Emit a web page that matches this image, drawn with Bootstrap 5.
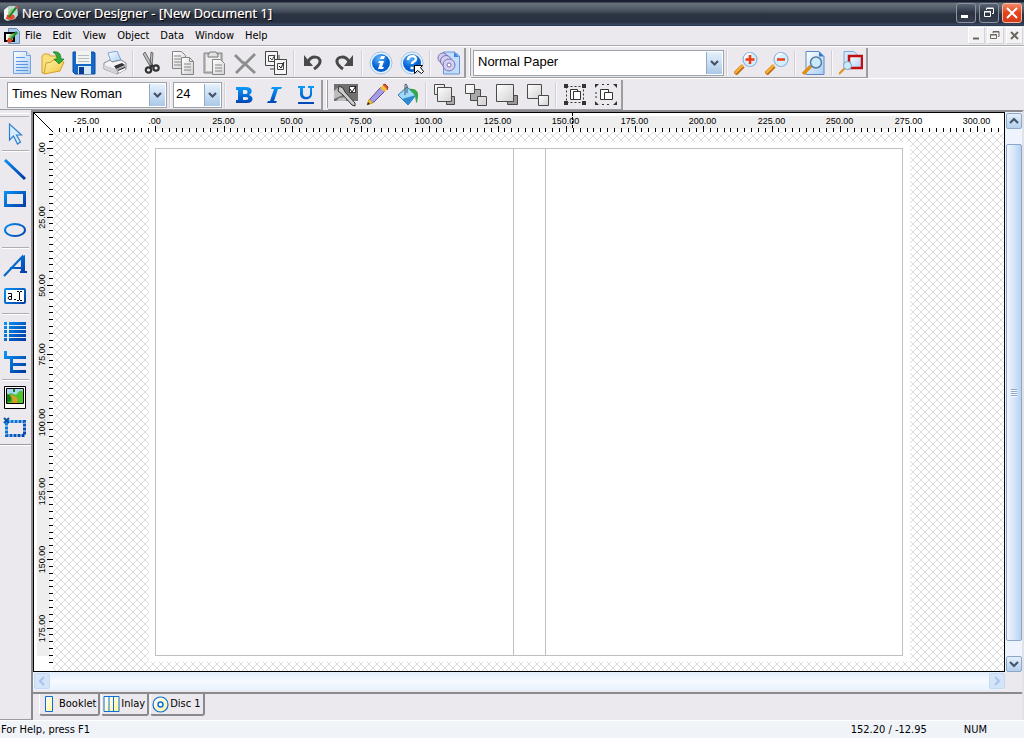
<!DOCTYPE html>
<html lang="en">
<head>
<meta charset="utf-8">
<meta name="viewport" content="width=device-width, initial-scale=1">
<title>Nero Cover Designer - [New Document 1]</title>
<link href="https://cdn.jsdelivr.net/npm/bootstrap@5.3.0/dist/css/bootstrap.min.css" rel="stylesheet">
<style>
:root{--face:#ebe9ed;--edge:#9d9da1}
body{font-family:"DejaVu Sans Condensed","Noto Sans",sans-serif;font-size:11px;line-height:14px;color:#000;background:var(--face)}
button{font:inherit}
.app-title{height:26px;padding:0 2px 0 3px;background:linear-gradient(#1a2032 0,#1a2032 2px,#69737d 3px,#56606c 8px,#39424f 13px,#2c3342 14px,#29303f 22px,#3b4a66 25px,#202a40 26px);color:#fff}
.app-title h1{font:500 13px/20px "Open Sans","Noto Sans",sans-serif;text-shadow:1px 1px 0 #000,0 0 1px #fff;margin:0 0 0 3px}
.title-buttons{gap:3px}
.win-btn{width:20px;height:20px;border:1px solid #8b94a2;border-radius:3px;background:linear-gradient(#5a6472,#2b3343 50%,#38404f);padding:0}
.win-close{background:linear-gradient(#f08a68,#e2431f 50%,#d93a17);border-color:#f3b9a6}
.menu-row{height:20px;border-bottom:1px solid #a9a8ad}
.menu-row a{color:#000;text-decoration:none;padding:2px 6px 2px 5px}
.doc-buttons{gap:2px;padding-right:1px}
.mdi-btn{width:17px;height:17px;border:1px solid;border-color:#fff #d5d3d8 #d5d3d8 #fff;background:#f3f2f5;padding:0}
.tool-row{height:32px;border-top:1px solid #fff;padding-top:1px}
.band{height:30px;border-right:2px solid var(--edge);border-bottom:1px solid var(--edge)}
.grip{width:2px;height:28px;background:#fff;border-right:1px solid var(--edge);margin-left:3px}
.tool{width:31px;height:30px;padding:0;border:0;border-radius:0;display:flex;align-items:center;justify-content:center;flex:none}
.tool svg{width:24px;height:24px;display:block}
.vsep{width:6px;height:26px;flex:none;background:linear-gradient(#d2d0d6,#d2d0d6) 2px 0/1px 100% no-repeat,linear-gradient(#f8f8fa,#f8f8fa) 3px 0/1px 100% no-repeat}
.combo{height:26px;border:1px solid #9ba4ab;box-shadow:inset 0 0 0 1px #fff;border-radius:0;appearance:none;padding:0 18px 2px 4px;font:13px/20px "Liberation Sans",Arial,sans-serif;color:#000;
background:#fff url("data:image/svg+xml,%3Csvg xmlns='http://www.w3.org/2000/svg' width='17' height='24'%3E%3Cdefs%3E%3ClinearGradient id='a' x2='0' y2='1'%3E%3Cstop stop-color='%23e6f1fb'/%3E%3Cstop offset='.5' stop-color='%23c9def4'/%3E%3Cstop offset='1' stop-color='%23a9c7e6'/%3E%3C/linearGradient%3E%3C/defs%3E%3Crect x='.5' y='.5' width='16' height='23' fill='url(%23a)' stroke='%238fabc8'/%3E%3Cpath d='M5 10l3.500 3.500l3.500-3.500' fill='none' stroke='%23455268' stroke-width='2.200'/%3E%3C/svg%3E") right 0 top 0 no-repeat}
.paper-combo{width:251px}
.font-combo{width:160px}
.size-combo{width:49px;padding-left:2px}
.dock{width:31px;padding-top:2px;border-bottom:1px solid var(--edge)}
.dock .tool{height:31px;width:30px}
.dock-grip{height:4px;margin:1px 2px 1px 0;border-top:1px solid #fff;border-bottom:1px solid #b5b4b9}
.hsep{height:4px;margin:0 2px;background:linear-gradient(#aeadb2,#aeadb2) 0 1px/100% 1px no-repeat,linear-gradient(#fff,#fff) 0 2px/100% 1px no-repeat}
.dock-end{height:2px;border-top:1px solid var(--edge);background:#fff}
.doc-frame{border-style:solid;border-width:2px 2px 0 2px;border-color:#8a898e #dfe3e8 #8a898e #8a898e;min-width:0}
.work{display:grid;grid-template-columns:19px minmax(0,1fr);grid-template-rows:19px minmax(0,1fr);border:1px solid #000;background:#fff;min-width:0}
.work>svg{display:block;width:100%;height:100%;overflow:hidden}
.work text{font:9px "Liberation Sans",Arial,sans-serif;text-anchor:middle}
.desk{padding:10px 0 9px 96px;overflow:hidden;background:#fff url("data:image/svg+xml,%3Csvg xmlns='http://www.w3.org/2000/svg' width='8' height='8' shape-rendering='crispEdges'%3E%3Cpath d='M0 0h1v1H0zM1 1h1v1H1zM2 2h1v1H2zM3 3h1v1H3zM4 4h1v1H4zM5 5h1v1H5zM6 6h1v1H6zM7 7h1v1H7zM7 0h1v1H7zM6 1h1v1H6zM5 2h1v1H5zM4 3h1v1H4zM3 4h1v1H3zM2 5h1v1H2zM1 6h1v1H1zM0 7h1v1H0z' fill='%23dcdcdc'/%3E%3C/svg%3E")}
.paper-area{width:761px;height:520px;padding:6px 7px 6px 6px;background:#fff}
.sheet{height:100%;border:1px solid #c0c0c0}
.back-panel{flex:358 1 0}.spine{flex:31 1 0;border-left:1px solid #c0c0c0;border-right:1px solid #c0c0c0}.front-panel{flex:357 1 0}
.vbar{width:17px;padding:1px 0 0 1px;background:#edf4fe}
.sbtn{width:16px;height:16px;flex:none;padding:0;border:1px solid #8ca7c8;border-radius:2px;background:linear-gradient(#e4effb,#b4d0ec);display:flex;align-items:center;justify-content:center}
.sbtn svg{width:12px;height:12px}
.sbtn:disabled{border-color:#c5d9f2;background:#d4e5fa}
.thumb{width:16px;border:1px solid #8ca7c8;border-radius:2px;background:linear-gradient(90deg,#f0f7ff,#dbe9fc 40%,#b9d1f2);margin:15px 0}
.thumb i{display:block;width:6px;height:8px;background:repeating-linear-gradient(#8fa9c6 0 1px,#f3f8ff 1px 2px)}
.hbar{height:18px;padding:1px 0 1px 1px;background:linear-gradient(#e2eefc,#f6faff 50%,#e8f2fe)}
.corner{width:17px}
.sheet-tabs{height:28px;border-top:2px solid #8a898e;margin-top:2px;padding-left:6px}
.sheet-tab{height:22px;padding:0 2px 0 1px;border:0;border-right:2px solid #8a898e;border-bottom:2px solid #8a898e;border-left:1px solid #fff;border-radius:0 0 3px 3px;background:var(--face);display:flex;align-items:center;gap:1px;margin-right:1px}
.sheet-tab svg{width:17px;height:17px}
.status{height:18px;background:#f0f3f8;border-top:1px solid #fff;padding:0 37px 0 1px}
.coords{margin-right:37px}
</style>
</head>
<body class="min-vh-100 d-flex flex-column">
<svg width="0" height="0" class="position-absolute" aria-hidden="true"><defs>
<linearGradient id="gBlue" x2="0" y2="1"><stop stop-color="#0a9bff"/><stop offset="1" stop-color="#0046b4"/></linearGradient>
<linearGradient id="gBlueV" gradientUnits="userSpaceOnUse" x1="0" y1="0" x2="24" y2="24"><stop stop-color="#0a9bff"/><stop offset="1" stop-color="#002f96"/></linearGradient>
<linearGradient id="gDoc" x2="1" y2="1"><stop stop-color="#fff"/><stop offset="1" stop-color="#a9cdf5"/></linearGradient>
<linearGradient id="gGrey" x2="1" y2="1"><stop stop-color="#fff"/><stop offset="1" stop-color="#d2d2d2"/></linearGradient>
<linearGradient id="gFold" x2="1" y2="1"><stop stop-color="#fff3a8"/><stop offset="1" stop-color="#f2c43d"/></linearGradient>
<radialGradient id="gBall" cx=".4" cy=".25"><stop stop-color="#5db4ff"/><stop offset="1" stop-color="#0560cf"/></radialGradient>
<linearGradient id="gYel" x2="1" y2="1"><stop stop-color="#fff"/><stop offset="1" stop-color="#fff799"/></linearGradient>
<g id="lens"><path d="M1 23l8-8" stroke="#b86a12" stroke-width="4.500"/><path d="M1 22l8-8" stroke="#f8ab36" stroke-width="2.500"/><circle cx="16" cy="8.500" r="7" fill="#d3efff" stroke="#8fb5dc" stroke-width="1.200"/><path d="M11 8a5 5 0 0 1 6-5" stroke="#fff" stroke-width="2" fill="none"/></g>
<g id="logo"><path d="M1 5l5-4h8l1 9-3 4-8 2-3-2z" fill="#b9d9cf"/><path d="M1 5l4-3v9l-4 3z" fill="#f4f6f5"/><path d="M3 14l1-4 3-1 4 1 1 3-4 2z" fill="#e8492b"/><path d="M5 8l3-4 4-1-3 5-3 3z" fill="#8ccb6a"/><path d="M5 12L13 1l2 1-8 10z" fill="#178032"/><path d="M12 2l2-1 1 2-1 1z" fill="#e8492b"/></g>
</defs></svg>

<header>
 <div class="app-title d-flex align-items-center">
  <svg width="16" height="16" viewBox="0 0 16 16" aria-hidden="true"><use href="#logo"/></svg>
  <h1 class="flex-grow-1 text-nowrap">Nero Cover Designer - [New Document 1]</h1>
  <div class="title-buttons d-flex">
   <button class="win-btn" aria-label="Minimize"><svg class="d-block" width="18" height="18"><path d="M4 12.500h7" stroke="#fff" stroke-width="3"/></svg></button>
   <button class="win-btn" aria-label="Restore"><svg class="d-block" width="18" height="18" fill="none" stroke="#fff"><path d="M6.500 6V4.500h7v5H12M6.500 4h7"/><path d="M4.500 7.500h6v5h-6zM4 8h7"/></svg></button>
   <button class="win-btn win-close" aria-label="Close"><svg class="d-block" width="18" height="18"><path d="M4 4l10 10M14 4L4 14" stroke="#fff" stroke-width="2"/></svg></button>
  </div>
 </div>
 <nav class="menu-row d-flex align-items-center" aria-label="Menu">
  <svg class="ms-1" width="16" height="16" viewBox="0 0 16 16" aria-hidden="true"><path d="M4.500.500h8l3 3v12h-11z" fill="#a9c7ea" stroke="#6c8db8"/><path d="M1 5h9v8H1z" fill="#fff" stroke="#000" stroke-width="2"/><path d="M3 14l1-4 4-1 1 3-3 3z" fill="#e8492b"/><path d="M4 9l3-3 4-1-3 5z" fill="#8ccb6a"/><path d="M6 11l6-8 2 2-7 7z" fill="#23933a"/></svg>
  <div class="d-flex flex-grow-1 text-nowrap">
   <a href="#">File</a><a href="#">Edit</a><a href="#">View</a><a href="#">Object</a><a href="#">Data</a><a href="#">Window</a><a href="#">Help</a>
  </div>
  <div class="doc-buttons d-flex">
   <button class="mdi-btn" aria-label="Minimize document"><svg class="d-block" width="15" height="15"><path d="M4 10.500h6" stroke="#6b695f" stroke-width="2"/></svg></button>
   <button class="mdi-btn" aria-label="Restore document"><svg class="d-block" width="15" height="15" fill="none" stroke="#6b695f"><path d="M5 5V3.500h6v5h-1M5 4h6"/><path d="M2.500 6.500h6v4h-6zM2 7h7"/></svg></button>
   <button class="mdi-btn" aria-label="Close document"><svg class="d-block" width="15" height="15"><path d="M4 4l7 7M11 4l-7 7" stroke="#6b695f" stroke-width="2"/></svg></button>
  </div>
 </nav>

 <div class="tool-row d-flex" role="toolbar" aria-label="Standard">
  <div class="band d-flex align-items-center" style="padding-left:6px">
   <button class="tool btn" aria-label="New"><svg viewBox="0 0 24 24"><path d="M3.500.500h13l4 4v18h-17z" fill="url(#gDoc)" stroke="#79a5dd"/><path d="M16.500.500v4h4" fill="#d4e7fc" stroke="#79a5dd"/><path d="M6 6.500h9M6 10.500h12M6 13.500h12M6 16.500h12M6 19.500h12" stroke="#5b97de"/></svg></button>
   <button class="tool btn" aria-label="Open"><svg viewBox="0 0 24 24"><path d="M1 5l2-2h5l1 2h9v5L4 22H1z" fill="#f8e07c" stroke="#cfa02c"/><path d="M5 12l5-1 2-2 11 2-4 9-16 3z" fill="url(#gFold)" stroke="#cfa02c"/><path d="M12 1c6-1 8 2 8 7h3l-5 5-5-5h3c0-3-1-5-4-7z" fill="#35a935" stroke="#14762b" stroke-width=".7"/></svg></button>
   <button class="tool btn" aria-label="Save"><svg viewBox="0 0 24 24"><path d="M1 1h21l1 1v21H3l-2-2z" fill="#1668c8" stroke="#0b4ba2"/><path d="M4 0h15v13H4z" fill="#f2f2ee"/><path d="M6 4.500h11M6 7.500h11M6 10.500h11" stroke="#b7bdc2"/><path d="M6 15h13v8H6z" fill="#d7e9f9"/><path d="M7 16h5v7H7z" fill="#0c3c92"/></svg></button>
   <button class="tool btn" aria-label="Print"><svg viewBox="0 0 24 24"><path d="M8 11L5 2l9-2 4 9z" fill="url(#gDoc)" stroke="#7aa6df"/><path d="M1 12l6-3 2 2 9-2 5 3v6l-9 5-13-5z" fill="#f4f3f6" stroke="#8b8b95"/><path d="M1 14l12 4v5L1 18z" fill="#d2d1d8"/><path d="M13 18l10-4v4l-9 5z" fill="#a9a8b2"/><path d="M11 15l8-3 3 2-9 4z" fill="#333"/><path d="M15 19l7-3v3l-6 3z" fill="#222"/><path d="M15 20l7-3v2l-6 3z" fill="#fff"/></svg></button>
   <span class="vsep"></span>
   <button class="tool btn" aria-label="Cut"><svg viewBox="0 0 24 24"><path d="M3 3l2-2 8 14-2 2zM11 1l2 1-1 14-2-2z" fill="#bcbcbc" stroke="#555" stroke-width=".8"/><g fill="none" stroke="#333" stroke-width="2.200"><circle cx="8.500" cy="19" r="2.700"/><circle cx="16" cy="17" r="2.700"/><path d="M10 16l3-2"/></g></svg></button>
   <button class="tool btn" aria-label="Copy"><svg viewBox="0 0 24 24" fill="url(#gGrey)" stroke="#858585"><path d="M1.500.500h9l4 4v13h-13zM3 5h7M3 8h8M3 11h8M3 14h8"/><path d="M10.500 6.500h8l4 4v13h-12zM18.500 6.500v4h4M13 13h7M13 16h7M13 19h7"/></svg></button>
   <button class="tool btn" aria-label="Paste"><svg viewBox="0 0 24 24"><path d="M2 2h18v20H2z" fill="#c3c3c3" stroke="#818181"/><path d="M4 4h14v16H4z" fill="#eee"/><path d="M6 4l2-3h6l2 3v2H6z" fill="#e2e2e2" stroke="#777"/><path d="M10.500 8.500h8l4 4v11h-12zM13 14h7M13 17h7M13 20h7" fill="url(#gGrey)" stroke="#858585"/></svg></button>
   <button class="tool btn" aria-label="Delete"><svg viewBox="0 0 24 24"><path d="M2 4l8 8M22 3L3 22M10 11l12 11" stroke="#8d8d8d" stroke-width="2.800" fill="none"/></svg></button>
   <button class="tool btn" aria-label="Select all"><svg viewBox="0 0 24 24" fill="#f6f6f6" stroke="#444"><path d="M1.500.500h12v14h-12z"/><path d="M4.500 4.500h6v6h-6z"/><path d="M6 7l2 2 3-5M15 4v5M6 18h4" fill="none"/><path d="M10.500 8.500h12v15h-12z"/><path d="M13.500 12.500h6v6h-6z"/><path d="M15 15l2 2 3-6" fill="none" stroke="#111"/></svg></button>
   <span class="vsep"></span>
   <button class="tool btn" aria-label="Undo"><svg viewBox="0 0 24 24"><path d="M7 11c3-7 13-6 12 0-.5 3-3 5-6 7" fill="none" stroke="#494949" stroke-width="3"/><path d="M3 4v11h9z" fill="#494949"/></svg></button>
   <button class="tool btn" aria-label="Redo"><svg viewBox="0 0 24 24"><path d="M17 11C14 4 4 5 5 11c.5 3 3 5 6 7" fill="none" stroke="#494949" stroke-width="3"/><path d="M21 4v11h-9z" fill="#494949"/></svg></button>
   <span class="vsep"></span>
   <button class="tool btn" aria-label="Info"><svg viewBox="0 0 24 24"><circle cx="12" cy="12" r="11" fill="#eaf3fc" stroke="#9fc3ea"/><circle cx="12" cy="12" r="9" fill="url(#gBall)"/><path d="M12 5h4l-1 3h-4zM10 10h5l-2 6h2l-1 2H9l2-6H9z" fill="#fff"/></svg></button>
   <button class="tool btn" aria-label="Help"><svg viewBox="0 0 24 24"><circle cx="12" cy="12" r="11" fill="#eaf3fc" stroke="#9fc3ea"/><circle cx="12" cy="12" r="9" fill="url(#gBall)"/><path d="M8 9c0-5 8-5 8-1 0 3-4 2-4 5M10.500 17h3" fill="none" stroke="#fff" stroke-width="2.500"/><path d="M14.500 14.500h8l-2 2 3 4-2 2-4-3-3 3z" fill="#fff" stroke="#000"/></svg></button>
   <span class="vsep"></span>
   <button class="tool btn" aria-label="Nero discs"><svg viewBox="0 0 24 24"><path d="M6.500 1h11l5 4v18h-16z" fill="#c2defc" stroke="#6496db"/><path d="M17 1v5h5" fill="#3c86e1"/><g fill="#d3cfee" stroke="#7772b4"><circle cx="6" cy="7" r="5"/><circle cx="9" cy="10" r="5.500"/><circle cx="12" cy="14" r="6"/></g><circle cx="12" cy="14" r="2" fill="#fff" stroke="#7772b4"/></svg></button>
  </div>
  <div class="grip"></div>
  <div class="band d-flex align-items-center" style="padding-left:2px">
   <select class="combo paper-combo" aria-label="Paper type"><option>Normal Paper</option></select>
   <span class="vsep"></span>
   <button class="tool btn" aria-label="Zoom in"><svg viewBox="0 0 24 24"><use href="#lens"/><path d="M16 4v9M11.500 8.500h9" stroke="#f23b0c" stroke-width="2.500"/></svg></button>
   <button class="tool btn" aria-label="Zoom out"><svg viewBox="0 0 24 24"><use href="#lens"/><path d="M12 8.500h8" stroke="#f23b0c" stroke-width="2.500"/></svg></button>
   <span class="vsep"></span>
   <button class="tool btn" aria-label="Fit page"><svg viewBox="0 0 24 24"><path d="M4 .500h13l5 5v18H4z" fill="url(#gDoc)" stroke="#5989c9"/><path d="M17 .500v5h5z" fill="#3477ce"/><path d="M1 23l8-8" stroke="#e09018" stroke-width="3.500"/><circle cx="14" cy="11.500" r="5.500" fill="#c9eafa" stroke="#587c9f" stroke-width="1.500"/></svg></button>
   <span class="vsep"></span>
   <button class="tool btn" aria-label="Fit selection"><svg viewBox="0 0 24 24"><path d="M5 .500h10l5 5v8H5z" fill="#d5e8fb" stroke="#7da8df"/><path d="M10 5h13v12H10z" fill="url(#gDoc)" stroke="#c20d12" stroke-width="2.500"/><path d="M0 23l7-7" stroke="#e09018" stroke-width="2"/><circle cx="8.500" cy="14.500" r="4" fill="#c9eafa" stroke="#7ba0bc"/></svg></button>
  </div>
 </div>

 <div class="tool-row d-flex" role="toolbar" aria-label="Format">
  <div class="band d-flex align-items-center" style="padding-left:7px">
   <select class="combo font-combo" aria-label="Font"><option>Times New Roman</option></select>
   <span class="vsep"></span>
   <select class="combo size-combo" aria-label="Font size"><option>24</option></select>
   <span class="vsep"></span>
   <button class="tool btn" aria-label="Bold"><svg viewBox="0 0 24 24"><path d="M4 4h10c7 0 7 6 3 8 5 1 5 8-2 8H4v-3h2V7H4zM11 7v4h3c2 0 2-4 0-4zM11 14v3h3c3 0 3-3 0-3z" fill="url(#gBlue)" fill-rule="evenodd"/></svg></button>
   <button class="tool btn" aria-label="Italic"><svg viewBox="0 0 24 24"><path d="M9 4h10l-1 2h-3l-4 12h3l-1 2H4l1-2h2l4-12H8z" fill="url(#gBlue)"/></svg></button>
   <button class="tool btn" aria-label="Underline"><svg viewBox="0 0 24 24"><path d="M4 3h7v2H9v6c0 4 7 4 7 0V5h-2V3h6v2h-2v6c0 7-12 7-12 0V5H4zM4 19h16v2H4z" fill="url(#gBlue)"/></svg></button>
  </div>
  <div class="grip"></div>
  <div class="band d-flex align-items-center" style="padding-left:2px">
   <button class="tool btn" aria-label="Background properties"><svg viewBox="0 0 24 24"><path d="M0 1h24v17H0z" fill="#707070"/><path d="M0 8l6-5 5 8-11 5zM5 15l7-1v4H2z" fill="#bdbdbd"/><path d="M15.500 3.500h6v6h-6z" fill="#fff" stroke="#333"/><path d="M16 6l2 3 4-6" fill="none" stroke="#111"/><path d="M5 3l4 2 2 4 10 11v3l-3-1L8 11 4 8z" fill="#ccc" stroke="#333"/></svg></button>
   <button class="tool btn" aria-label="Pen"><svg viewBox="0 0 24 24"><path d="M3 21l2-5L16 4l4 4L9 19z" fill="#a79ce0" stroke="#56509c"/><path d="M18 2l2-1 3 3-1 3z" fill="#e0502f" stroke="#a63018"/><path d="M15 5l3-3 4 4-2 3z" fill="#f3c13b"/><path d="M2 22l2-6 4 4z" fill="#f7bd28" stroke="#b8860b" stroke-width=".5"/><path d="M2 22l1-3 2 2z" fill="#222"/></svg></button>
   <button class="tool btn" aria-label="Fill"><svg viewBox="0 0 24 24"><path d="M2 12l9-8 9 8-8 10z" fill="#9ed8fa" stroke="#2d78ad"/><path d="M20 12l-8 10-6-6z" fill="#2d89d1"/><path d="M9 12V2q0-2 2 0v8" fill="none" stroke="#456"/><path d="M13 6c6-1 10 2 9 8l-1 6c-2-1-1-7-3-9z" fill="#35a749"/></svg></button>
   <span class="vsep"></span>
   <button class="tool btn" aria-label="To front"><svg viewBox="0 0 24 24" fill="url(#gGrey)" stroke="#4b4b4b"><path d="M1.500 1.500h10v10h-10z"/><path d="M13.500 13.500h8v8h-8z" fill="#aaa"/><path d="M4.500 4.500h14v14h-14z"/></svg></button>
   <button class="tool btn" aria-label="Forward"><svg viewBox="0 0 24 24" fill="url(#gGrey)" stroke="#4b4b4b"><path d="M6.500 6.500h10v11h-10z" fill="#aaa"/><path d="M1.500 1.500h9v9h-9zM13.500 13.500h9v9h-9z"/></svg></button>
   <button class="tool btn" aria-label="Backward"><svg viewBox="0 0 24 24" fill="url(#gGrey)" stroke="#4b4b4b"><path d="M12.500 12.500h10v9h-10z" fill="#999"/><path d="M1.500 1.500h17v17h-17z"/></svg></button>
   <button class="tool btn" aria-label="To back"><svg viewBox="0 0 24 24" fill="url(#gGrey)" stroke="#4b4b4b"><path d="M1.500 1.500h14v14h-14z"/><path d="M12.500 12.500h10v10h-10z"/></svg></button>
   <span class="vsep"></span>
   <button class="tool btn" aria-label="Group"><svg viewBox="0 0 24 24" fill="#fff" stroke="#333"><path d="M3.500 3.500h17v16h-17z" fill="none" stroke-dasharray="2 2"/><path d="M1 1h4v4H1zM19 1h4v4h-4zM1 18h4v4H1zM19 18h4v4h-4z" fill="#333" stroke="none"/><path d="M7.500 6.500h7v10h-7z"/><path d="M10.500 8.500h7v8h-7z"/></svg></button>
   <button class="tool btn" aria-label="Ungroup"><svg viewBox="0 0 24 24" fill="#fff" stroke="#333"><path d="M1 5V1h4zM19 1h4v4zM1 18v4h4zM19 22h4v-4z" fill="#333" stroke="none"/><path d="M2 9v2M2 13v2M8 1.500h2M13 1.500h2M8 21.500h2M13 21.500h2"/><path d="M6.500 6.500h8v10h-8z"/><path d="M10.500 9.500h8v7h-8z"/></svg></button>
  </div>
 </div>
</header>

<main class="d-flex flex-grow-1">
 <div class="dock flex-shrink-0" role="toolbar" aria-label="Drawing tools">
  <div class="dock-grip"></div>
  <button class="tool btn" aria-label="Select"><svg viewBox="0 0 24 24"><path d="M6.500 2v16l4-4 4 8 3-2-4-7h5z" fill="#d5eeff" stroke="#2e7fcd" stroke-width="1.200"/></svg></button>
  <div class="hsep"></div>
  <button class="tool btn" aria-label="Line"><svg viewBox="0 0 24 24"><path d="M2 3l20 19" stroke="url(#gBlueV)" stroke-width="3"/></svg></button>
  <button class="tool btn" aria-label="Rectangle"><svg viewBox="0 0 24 24"><path d="M2.500 4.500h19v13h-19z" fill="none" stroke="url(#gBlueV)" stroke-width="3"/></svg></button>
  <button class="tool btn" aria-label="Ellipse"><svg viewBox="0 0 24 24"><ellipse cx="12" cy="11" rx="10" ry="6" fill="none" stroke="url(#gBlueV)" stroke-width="2"/></svg></button>
  <div class="hsep"></div>
  <button class="tool btn" aria-label="Artistic text"><svg viewBox="0 0 24 24"><path d="M1 22L19 3v16M7 14h12" fill="none" stroke="url(#gBlueV)" stroke-width="2.200"/><path d="M18 3l4-2v16h2v2h-7v-2h1z" fill="url(#gBlueV)"/></svg></button>
  <button class="tool btn" aria-label="Text box"><svg viewBox="0 0 24 24"><rect x="2" y="4" width="20" height="14" rx="1" fill="#fff" stroke="url(#gBlueV)" stroke-width="2"/><path d="M5 8.500h3.500v6H6q-2-1.500 0-3h2.500M11 14.500h2M14 6.500h2M17 6.500h2M16.500 7v8M14 15.500h2M17 15.500h2" fill="none" stroke="#000"/></svg></button>
  <div class="hsep"></div>
  <button class="tool btn" aria-label="Track list"><svg viewBox="0 0 24 24"><path d="M1 3.500h3M6 3.500h17M1 7.500h3M6 7.500h17M1 11.500h3M6 11.500h17M1 15.500h3M6 15.500h17M1 19.500h3M6 19.500h17" stroke="url(#gBlueV)" stroke-width="3"/></svg></button>
  <button class="tool btn" aria-label="Directory tree"><svg viewBox="0 0 24 24"><path d="M2.500 0v6.500H23M8.500 6v14.500H23M8 13.500h15" fill="none" stroke="url(#gBlueV)" stroke-width="3"/></svg></button>
  <div class="hsep"></div>
  <button class="tool btn" aria-label="Image"><svg viewBox="0 0 24 24"><path d="M1.500.500h21v22h-21z" fill="#fff" stroke="#000"/><path d="M3.500 2.500h17v15h-17z" fill="#a6d5f5" stroke="#000"/><path d="M4 17V9l4-2 5 2q5-7 7-3v11z" fill="#52c22d"/><path d="M4 8q6 1 4 7l-4 2z" fill="#197c16"/><path d="M8 9q9 2 6 8H9q2-5-2-7z" fill="#dd9d24"/><path d="M10 3h2v3h-2z" fill="#197c16"/></svg></button>
  <button class="tool btn" aria-label="Field"><svg viewBox="0 0 24 24"><path d="M3.500 4.500h18v14h-18z" fill="none" stroke="url(#gBlueV)" stroke-width="3" stroke-dasharray="3 1"/><path d="M1 1l5 5M6 1L1 6" stroke="#0a50a6" stroke-width="2"/></svg></button>
  <div class="dock-end"></div>
 </div>

 <div class="doc-frame d-flex flex-column flex-grow-1">
  <div class="d-flex flex-grow-1">
   <div class="work flex-grow-1">
    <svg aria-hidden="true"><path d="M0 0l19 19" stroke="#000"/></svg>
    <svg id="ruler-x" role="img" aria-label="Horizontal ruler"><rect x="102" y="3" width="748" height="13" fill="#eee"/></svg>
    <svg id="ruler-y" role="img" aria-label="Vertical ruler"><rect x="3" y="16" width="13" height="508" fill="#eee"/></svg>
    <div class="desk"><div class="paper-area"><div class="sheet d-flex"><div class="back-panel"></div><div class="spine"></div><div class="front-panel"></div></div></div></div>
   </div>
   <div class="vbar d-flex flex-column flex-shrink-0">
    <button class="sbtn" aria-label="Scroll up"><svg viewBox="0 0 12 12"><path d="M2 8l4-4 4 4" fill="none" stroke="#44566e" stroke-width="2.200"/></svg></button>
    <div class="thumb flex-grow-1 d-flex align-items-center justify-content-center"><i></i></div>
    <button class="sbtn" aria-label="Scroll down"><svg viewBox="0 0 12 12"><path d="M2 4l4 4 4-4" fill="none" stroke="#44566e" stroke-width="2.200"/></svg></button>
   </div>
  </div>
  <div class="d-flex">
   <div class="hbar d-flex flex-grow-1 justify-content-between">
    <button class="sbtn" disabled aria-label="Scroll left"><svg viewBox="0 0 12 12"><path d="M8 2L4 6l4 4" fill="none" stroke="#a9c3ea" stroke-width="2"/></svg></button>
    <button class="sbtn" disabled aria-label="Scroll right"><svg viewBox="0 0 12 12"><path d="M4 2l4 4-4 4" fill="none" stroke="#a9c3ea" stroke-width="2"/></svg></button>
   </div>
   <div class="corner"></div>
  </div>
  <div class="sheet-tabs d-flex" role="tablist">
   <button class="sheet-tab" role="tab"><svg viewBox="0 0 17 17"><path d="M4.500.500h7v15h-7z" fill="url(#gYel)" stroke="#0a6fd8"/></svg>Booklet</button>
   <button class="sheet-tab" role="tab" aria-selected="true"><svg viewBox="0 0 17 17"><path d="M1 .500h15v15H1zM6 .500v15M10.500.500v15" fill="url(#gYel)" stroke="#0a6fd8"/></svg>Inlay</button>
   <button class="sheet-tab" role="tab"><svg viewBox="0 0 17 17"><circle cx="8.500" cy="8.500" r="7.500" fill="url(#gYel)" stroke="#0a6fd8" stroke-width="1.200"/><circle cx="8.500" cy="8.500" r="2.500" fill="#fff" stroke="#0a6fd8" stroke-width="1.500"/></svg>Disc 1</button>
  </div>
 </div>
</main>

<footer class="status d-flex align-items-center text-nowrap">
 <span class="flex-grow-1">For Help, press F1</span><span class="coords">152.20 / -12.95</span><span>NUM</span>
</footer>

<script>
// Both rulers share one scale: 25 mm is 68.5 px, with a tick every 2.5 mm.
const NS = 'http://www.w3.org/2000/svg', STEP = 68.5 / 10;
function add(svg, name, attrs, text) {
  const el = document.createElementNS(NS, name);
  for (const k in attrs) el.setAttribute(k, attrs[k]);
  if (text) el.textContent = text;
  svg.appendChild(el);
}
function label(i) { return i === 0 ? '.00' : (i * 2.5).toFixed(2); }
const rx = document.getElementById('ruler-x'), ry = document.getElementById('ruler-y');
const lastX = Math.floor((rx.clientWidth - 103) / STEP);
for (let i = -14; i <= lastX; i++) {
  const x = Math.round(102 + i * STEP) + .5, major = i % 10 === 0;
  add(rx, 'path', {d: `M${x} ${major ? 13 : 15}V19`, stroke: '#000'});
  if (major) add(rx, 'text', {x: x - 1, y: 11}, label(i));
}
add(rx, 'path', {d: 'M519.5 0V15', stroke: '#000', 'stroke-dasharray': '3 1'});
for (let i = -2; i <= 75; i++) {
  const y = Math.round(16 + i * STEP) + .5, major = i % 10 === 0;
  add(ry, 'path', {d: `M${major ? 13 : 15} ${y}H19`, stroke: '#000'});
  if (major) add(ry, 'text', {transform: `translate(11 ${y}) rotate(-90)`}, label(i));
}
</script>
<script src="https://cdn.jsdelivr.net/npm/bootstrap@5.3.0/dist/js/bootstrap.bundle.min.js"></script>
</body>
</html>
